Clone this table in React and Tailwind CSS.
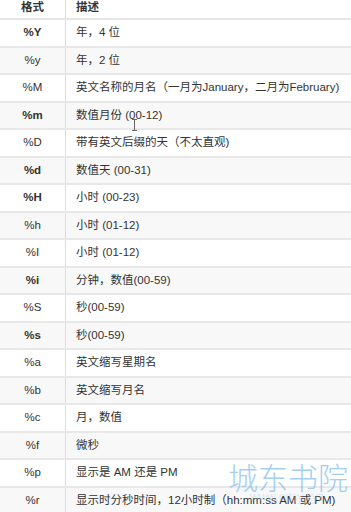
const rows = [
  { code: "%Y", desc: "年，4 位", bold: true },
  { code: "%y", desc: "年，2 位" },
  { code: "%M", desc: "英文名称的月名（一月为January，二月为February)" },
  { code: "%m", desc: "数值月份 (00-12)", bold: true },
  { code: "%D", desc: "带有英文后缀的天（不太直观)" },
  { code: "%d", desc: "数值天 (00-31)", bold: true },
  { code: "%H", desc: "小时 (00-23)", bold: true },
  { code: "%h", desc: "小时 (01-12)" },
  { code: "%I", desc: "小时 (01-12)" },
  { code: "%i", desc: "分钟，数值(00-59)", bold: true },
  { code: "%S", desc: "秒(00-59)" },
  { code: "%s", desc: "秒(00-59)", bold: true },
  { code: "%a", desc: "英文缩写星期名" },
  { code: "%b", desc: "英文缩写月名" },
  { code: "%c", desc: "月，数值" },
  { code: "%f", desc: "微秒" },
  { code: "%p", desc: "显示是 AM 还是 PM" },
  { code: "%r", desc: "显示时分秒时间，12小时制（hh:mm:ss AM 或 PM)" },
];

export default function App() {
  return (
    <div
      className="relative w-[351px] h-[512px] overflow-hidden bg-white text-[#333] text-[11.5px]"
      style={{ fontFamily: '"Liberation Sans", Arial, "Noto Sans CJK SC", sans-serif' }}
    >
      {/* header */}
      <div className="flex h-[20px] border-b-2 border-[#e6e6e6] font-bold">
        <div className="w-[66px] shrink-0 border-r border-[#dcdcdc] text-center leading-[15px]">格式</div>
        <div className="flex-1 pl-[10px] leading-[15px]">描述</div>
      </div>

      {rows.map((r, i) => (
        <div
          key={r.code}
          className={`flex h-[27.5px] border-b-2 border-[#e8e8e8] ${i % 2 === 1 ? "bg-[#f8f8f8]" : "bg-white"}`}
        >
          <div
            className={`w-[66px] shrink-0 border-r border-[#dcdcdc] flex items-center justify-center ${r.bold ? "font-bold" : ""}`}
          >
            {r.code}
          </div>
          <div className="flex-1 flex items-center pl-[10px] whitespace-nowrap">{r.desc}</div>
        </div>
      ))}

      {/* text cursor */}
      <div className="absolute left-[131px] top-[119px] w-[6px] h-[12px] flex flex-col items-center">
        <div className="w-[5px] h-px bg-[#666]" />
        <div className="w-px flex-1 bg-[#666]" />
        <div className="w-[5px] h-px bg-[#666]" />
      </div>

      {/* watermark */}
      <div className="absolute left-[228px] top-[459px] pointer-events-none whitespace-nowrap">
        <div
          className="text-[30px] leading-[35px] text-[#86c0f0] opacity-75"
          style={{ fontFamily: '"Noto Sans CJK SC", sans-serif', fontWeight: 300 }}
        >
          城东书院
        </div>
        <div className="text-[12px] leading-[13px] text-[#9ccaf0] opacity-30 pl-[22px] -mt-[3px]">
          www.cdsy.xyz
        </div>
      </div>
    </div>
  );
}
